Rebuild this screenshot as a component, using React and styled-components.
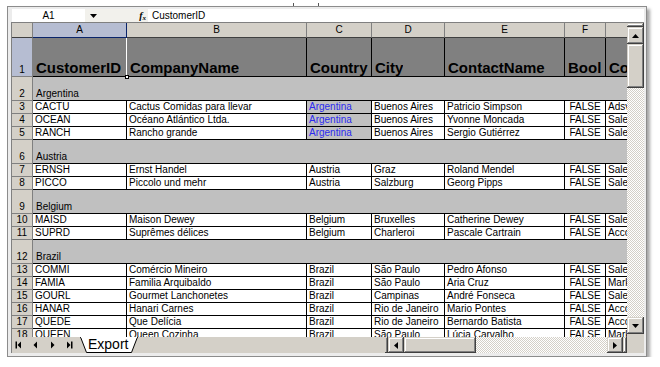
import React from 'react'
import styled, { createGlobalStyle, css } from 'styled-components'

const chrome = '#d4d0c8'

const GlobalStyle = createGlobalStyle`
  * { box-sizing: border-box; }
  body {
    margin: 0;
    background: #fff;
    font-family: "Liberation Sans", Arial, sans-serif;
    color: #000;
  }
`

const raised = css`
  background: ${chrome};
  box-shadow: inset -1px -1px #404040, inset 1px 1px ${chrome},
    inset -2px -2px #808080, inset 2px 2px #fff;
`

const checker = css`
  background-color: ${chrome};
  background-image: repeating-conic-gradient(${chrome} 0 25%, #fff 0 50%);
  background-size: 2px 2px;
`

const Window = styled.div`
  position: relative;
  margin: 6px 0 0 7px;
  width: 640px;
  height: 351px;
  padding: 2px 2px 3px 3px;
  border: 1px solid #8c8c8c;
  background: #ececec;
  box-shadow: 3px 3px 3px rgba(0, 0, 0, 0.35);
  display: flex;
  flex-direction: column;
`

const Tick = styled.span`
  position: absolute;
  top: -4px;
  left: ${p => p.$x}px;
  width: 1px;
  height: 3px;
  background: #555;
`

const FormulaBar = styled.div`
  flex: none;
  height: 14px;
  min-height: 0;
  overflow: hidden;
  display: flex;
  padding-left: 1px;
  border-bottom: 1px solid #808080;
  font-size: 10px;
  line-height: 13px;
`

const NameBox = styled.div`
  flex: 0 0 73px;
  background: #fff;
  text-align: center;
`

const NameDrop = styled.div`
  flex: 0 0 17px;
  background: #f2f1ec;
  display: flex;
  align-items: center;
  justify-content: center;
`

const FxBox = styled.div`
  flex: 0 0 46px;
  background: #f2f1ec;
  text-align: right;
  padding-right: 2px;
  font-family: "Liberation Serif", serif;
  font-style: italic;
  font-weight: bold;
  font-size: 10px;
  line-height: 13px;
  sub {
    font-size: 7px;
    line-height: 0;
    vertical-align: -1px;
  }
`

const FormulaInput = styled.div`
  flex: 1;
  background: #fff;
  padding-left: 4px;
`

const Sheet = styled.div`
  flex: none;
  height: 314px;
  min-height: 0;
  overflow: hidden;
  display: flex;
  border-left: 1px solid #808080;
`

const Viewport = styled.div`
  flex: 0 0 615px;
  height: 100%;
  overflow: hidden;
  background: #fff;
`

const Row = styled.div`
  display: flex;
  height: ${p => p.$h}px;
`

const Corner = styled.div`
  flex: 0 0 21px;
  background: ${chrome};
  border-right: 1px solid #808080;
  border-bottom: 1px solid #404040;
`

const ColLetter = styled.div`
  flex: 0 0 ${p => p.$w}px;
  background: ${p => (p.$active ? '#b6bdd2' : chrome)};
  border-right: 1px solid ${p => (p.$active ? '#0a246a' : '#808080')};
  border-bottom: 1px solid ${p => (p.$active ? '#0a246a' : '#404040')};
  font-size: 10px;
  line-height: 14px;
  text-align: center;
`

const RowNum = styled.div`
  flex: 0 0 21px;
  background: ${p => (p.$active ? '#b6bdd2' : chrome)};
  border-right: 1px solid #808080;
  border-bottom: 1px solid #808080;
  display: flex;
  align-items: flex-end;
  justify-content: center;
  font-size: 10px;
  line-height: 12px;
`

const Cell = styled.div`
  position: relative;
  flex: 0 0 ${p => p.$w}px;
  display: flex;
  align-items: flex-end;
  justify-content: ${p => (p.$center ? 'center' : 'flex-start')};
  padding-left: ${p => (p.$center ? 0 : 2)}px;
  background: ${p => p.$bg || '#fff'};
  color: ${p => p.$color || '#000'};
  border-right: 1px solid #000;
  border-bottom: 1px solid #000;
  white-space: nowrap;
  overflow: hidden;
  font-size: 10px;
  line-height: 12px;
`

const HeadCell = styled(Cell)`
  overflow: visible;
  padding-left: 3px;
  background: #808080;
  font-size: 15px;
  font-weight: bold;
  line-height: 17px;
  ${p =>
    p.$active &&
    css`
      border-right-color: #fff;
    `}
`

const Handle = styled.span`
  position: absolute;
  right: -3px;
  bottom: -3px;
  width: 4px;
  height: 4px;
  background: #fff;
  border: 1px solid #000;
  z-index: 2;
`

const HeadClip = styled.span`
  overflow: hidden;
  white-space: nowrap;
`

const GroupCell = styled.div`
  flex: 0 0 653px;
  display: flex;
  align-items: flex-end;
  padding-left: 3px;
  background: #c0c0c0;
  border-bottom: 1px solid #000;
  font-size: 10px;
  line-height: 12px;
`

const VScroll = styled.div`
  flex: 0 0 17px;
  display: flex;
  flex-direction: column;
  background: ${chrome};
`

const SplitBox = styled.div`
  flex: 0 0 ${p => (p.$horizontal ? `${p.$size}px` : '4px')};
  ${raised};
`

const ScrollBtn = styled.div`
  flex: 0 0 ${p => p.$size}px;
  display: flex;
  align-items: center;
  justify-content: center;
  ${raised};
`

const Thumb = styled.div`
  flex: 0 0 ${p => p.$len}px;
  ${raised};
`

const Track = styled.div`
  flex: 1;
  ${checker};
`

const Gap = styled.div`
  flex: 0 0 ${p => p.$size}px;
`

const TabBar = styled.div`
  flex: none;
  height: 16px;
  display: flex;
  background: ${chrome};
  border-left: 1px solid #808080;
`

const Nav = styled.div`
  flex: 0 0 68px;
  display: flex;
`

const NavBtn = styled.div`
  flex: 0 0 17px;
  display: flex;
  align-items: center;
  padding-left: 3px;
`

const Tab = styled.div`
  position: relative;
  flex: 0 0 58px;
  padding-left: 8px;
  font-size: 14px;
  line-height: 15px;
  span {
    position: relative;
  }
  svg {
    position: absolute;
    left: 0;
    top: 0;
  }
`

const Spacer = styled.div`
  flex: 1;
`

const HScroll = styled.div`
  flex: 0 0 242px;
  display: flex;
`

const ScrollCorner = styled.div`
  flex: 0 0 17px;
  background: ${chrome};
`

const Arrow = ({ dir }) => {
  const pts = {
    up: '0,4 3.5,0 7,4',
    down: '0,0 3.5,4 7,0',
    left: '4,0 0,3.5 4,7',
    right: '0,0 4,3.5 0,7',
  }[dir]
  const horizontal = dir === 'up' || dir === 'down'
  return (
    <svg width={horizontal ? 7 : 4} height={horizontal ? 4 : 7} viewBox={horizontal ? '0 0 7 4' : '0 0 4 7'}>
      <polygon points={pts} fill="#000" />
    </svg>
  )
}

const NavIcon = ({ kind }) => (
  <svg width="8" height="8" viewBox="0 0 8 8">
    {kind === 'first' && (
      <>
        <rect x="0.5" y="0.5" width="1.5" height="7" fill="#000" />
        <polygon points="6,0.5 2.5,4 6,7.5" fill="#000" />
      </>
    )}
    {kind === 'prev' && <polygon points="5,0.5 1.5,4 5,7.5" fill="#000" />}
    {kind === 'next' && <polygon points="2,0.5 5.5,4 2,7.5" fill="#000" />}
    {kind === 'last' && (
      <>
        <polygon points="1,0.5 4.5,4 1,7.5" fill="#000" />
        <rect x="5" y="0.5" width="1.5" height="7" fill="#000" />
      </>
    )}
  </svg>
)

const columns = [
  { letter: 'A', title: 'CustomerID', w: 94 },
  { letter: 'B', title: 'CompanyName', w: 180 },
  { letter: 'C', title: 'Country', w: 65 },
  { letter: 'D', title: 'City', w: 73 },
  { letter: 'E', title: 'ContactName', w: 120 },
  { letter: 'F', title: 'Bool', w: 41, center: true },
  { letter: 'G', title: 'ContactTitle', w: 80 },
]

const groups = [
  {
    country: 'Argentina',
    h: 24,
    mark: true,
    rows: [
      ['CACTU', 'Cactus Comidas para llevar', 'Buenos Aires', 'Patricio Simpson', 'Adsviser'],
      ['OCEAN', 'Océano Atlántico Ltda.', 'Buenos Aires', 'Yvonne Moncada', 'Sales Agent'],
      ['RANCH', 'Rancho grande', 'Buenos Aires', 'Sergio Gutiérrez', 'Sales Representative'],
    ],
  },
  {
    country: 'Austria',
    h: 24,
    rows: [
      ['ERNSH', 'Ernst Handel', 'Graz', 'Roland Mendel', 'Sales Manager'],
      ['PICCO', 'Piccolo und mehr', 'Salzburg', 'Georg Pipps', 'Sales Manager'],
    ],
  },
  {
    country: 'Belgium',
    h: 24,
    rows: [
      ['MAISD', 'Maison Dewey', 'Bruxelles', 'Catherine Dewey', 'Sales Agent'],
      ['SUPRD', 'Suprêmes délices', 'Charleroi', 'Pascale Cartrain', 'Accounting Manager'],
    ],
  },
  {
    country: 'Brazil',
    h: 24,
    rows: [
      ['COMMI', 'Comércio Mineiro', 'São Paulo', 'Pedro Afonso', 'Sales Associate'],
      ['FAMIA', 'Familia Arquibaldo', 'São Paulo', 'Aria Cruz', 'Marketing Assistant'],
      ['GOURL', 'Gourmet Lanchonetes', 'Campinas', 'André Fonseca', 'Sales Associate'],
      ['HANAR', 'Hanari Carnes', 'Rio de Janeiro', 'Mario Pontes', 'Accounting Manager'],
      ['QUEDE', 'Que Delícia', 'Rio de Janeiro', 'Bernardo Batista', 'Accounting Manager'],
      ['QUEEN', 'Queen Cozinha', 'São Paulo', 'Lúcia Carvalho', 'Marketing Assistant'],
    ],
  },
]

const DataRow = ({ num, row, country, mark }) => {
  const [id, company, city, contact, title] = row
  const values = [id, company, country, city, contact, 'FALSE', title]
  return (
    <Row $h={13}>
      <RowNum>{num}</RowNum>
      {columns.map((c, i) => {
        const isCountry = i === 2 && mark
        return (
          <Cell
            key={c.letter}
            $w={c.w}
            $center={c.center}
            $bg={isCountry ? '#c0c0c0' : undefined}
            $color={isCountry ? '#2b2bf0' : undefined}
          >
            {values[i]}
          </Cell>
        )
      })}
    </Row>
  )
}

const Grid = () => {
  let num = 1
  const body = []
  groups.forEach(g => {
    num += 1
    body.push(
      <Row $h={g.h} key={`g${num}`}>
        <RowNum>{num}</RowNum>
        <GroupCell>{g.country}</GroupCell>
      </Row>
    )
    g.rows.forEach(r => {
      num += 1
      body.push(<DataRow key={`r${num}`} num={num} row={r} country={g.country} mark={g.mark} />)
    })
  })

  return (
    <Viewport>
      <Row $h={15}>
        <Corner />
        {columns.map((c, i) => (
          <ColLetter key={c.letter} $w={c.w} $active={i === 0}>
            {c.letter}
          </ColLetter>
        ))}
      </Row>
      <Row $h={39}>
        <RowNum $active>1</RowNum>
        {columns.map((c, i) => (
          <HeadCell key={c.letter} $w={c.w} $active={i === 0}>
            <HeadClip>{c.title}</HeadClip>
            {i === 0 && <Handle />}
          </HeadCell>
        ))}
      </Row>
      {body}
    </Viewport>
  )
}

const App = () => (
  <>
    <GlobalStyle />
    <Window>
      <Tick $x={285} />
      <Tick $x={310} />
      <FormulaBar>
        <NameBox>A1</NameBox>
        <NameDrop>
          <Arrow dir="down" />
        </NameDrop>
        <FxBox>
          f<sub>x</sub>
        </FxBox>
        <FormulaInput>CustomerID</FormulaInput>
      </FormulaBar>
      <Sheet>
        <Grid />
        <VScroll>
          <SplitBox />
          <ScrollBtn $size={17}>
            <Arrow dir="up" />
          </ScrollBtn>
          <Thumb $len={44} />
          <Track />
          <ScrollBtn $size={17}>
            <Arrow dir="down" />
          </ScrollBtn>
          <Gap $size={3} />
        </VScroll>
      </Sheet>
      <TabBar>
        <Nav>
          {['first', 'prev', 'next', 'last'].map(k => (
            <NavBtn key={k}>
              <NavIcon kind={k} />
            </NavBtn>
          ))}
        </Nav>
        <Tab>
          <svg width="58" height="16" viewBox="0 0 58 16">
            <polygon points="0.5,0 6.5,15.5 51.5,15.5 57.5,0" fill="#fff" stroke="#000" strokeWidth="1" />
            <rect x="1" y="0" width="56" height="1" fill="#fff" />
          </svg>
          <span>Export</span>
        </Tab>
        <Spacer />
        <HScroll>
          <SplitBox $horizontal $size={3} />
          <ScrollBtn $size={16}>
            <Arrow dir="left" />
          </ScrollBtn>
          <Thumb $len={72} />
          <Track />
          <ScrollBtn $size={16}>
            <Arrow dir="right" />
          </ScrollBtn>
          <SplitBox $horizontal $size={4} />
        </HScroll>
        <ScrollCorner />
      </TabBar>
    </Window>
  </>
)

export default App
